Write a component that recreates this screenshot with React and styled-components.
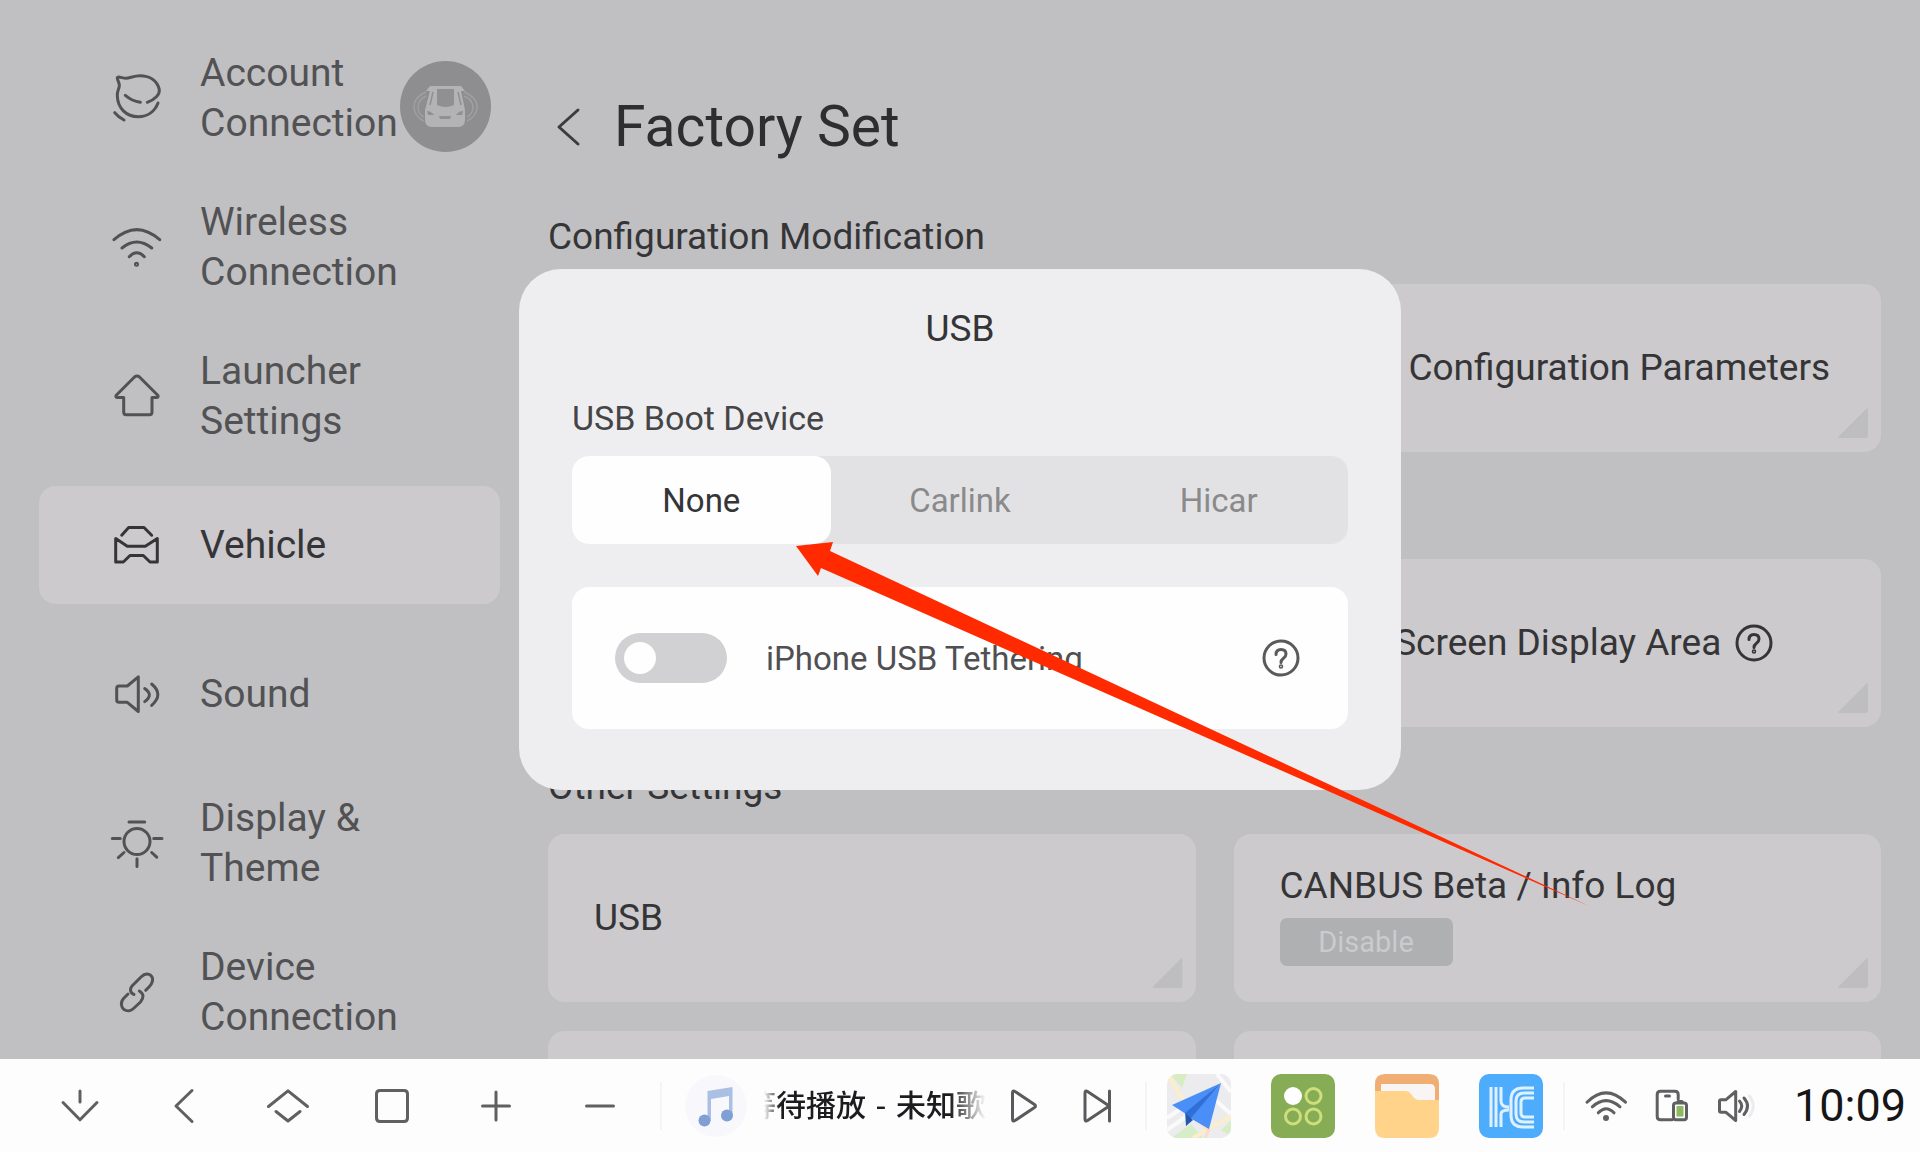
import React, { useState } from 'react';
import styled, { createGlobalStyle } from 'styled-components';


const menuItems = [
    { id: 'account', label: 'Account Connection' },
    { id: 'wireless', label: 'Wireless Connection' },
    { id: 'launcher', label: 'Launcher Settings' },
    { id: 'vehicle', label: 'Vehicle' },
    { id: 'sound', label: 'Sound' },
    { id: 'display', label: 'Display & Theme' },
    { id: 'device', label: 'Device Connection' },
]

const bootDevices = ['None', 'Carlink', 'Hicar'];

const menuIcons = {
    account: (
        <>
            <path d="M34.3 28.3C42 25.500 47 20.500 46.300 15.500C44 6 36 1.700 27 1.700C21 1.700 17 4 13 4.300C10 4.500 4.300 1.500 4.300 4C4.500 7 6.600 8.500 6.300 12C5.800 16 4 17 4.300 22C4.800 34 13 42.700 25.300 42.700C35 42.700 42 37 45 29" />
            <path d="M12.300 21.300Q19 27 27.300 28.300M1.700 38.700Q5 43 11 46" />
        </>
    ),
    wireless: (
        <>
            <path d="M1 16.700Q23.700 -3.500 46.700 16.700M9 25Q23.700 13 38.700 25M16.300 33.700Q23.700 26 31.300 33.700" />
            <circle cx="23.500" cy="41.300" r="1" />
        </>
    ),
    launcher: <path d="M21.500 5Q24 3 26.500 5L45 23.500Q45.500 25.500 43.500 25.500H39V40Q39 42.700 36.500 42.700H13.200Q10.700 42.700 10.700 40V25.500H4.500Q2.500 25.500 3 23.500Z" />,
    vehicle: <path d="M8.700 14.200L15.700 6.500H31L38.700 14.200M2.700 17.600L14.300 25.300H32.300L44.300 17.600V41H37L30.300 34.500H17L10.300 41H2.700Z" />,
    sound: <path d="M6 16H14.300L25.300 6.800V41.500L14.300 32.300H6Q3.700 32.300 3.700 30V18.300Q3.700 16 6 16ZM31.700 18.500Q41 25 31.700 31.600M38.700 14Q51 24.500 38.700 35.400" />,
    display: (
        <>
            <circle cx="24" cy="22.500" r="13" />
            <path d="M16 3H31.700M-0.700 19.500H7.300M40.700 19.500H49M5.300 38.600L11 33.500M38.700 33.500L43.700 38.200M24 39.800V47.400" />
        </>
    ),
    device: <path d="M21 26.500C17 25 16.500 21 19 18L28 9C33 4 38 6 39.500 10C40.500 14 38 17 32.700 22.300M15 26L11 30C7 34 8 39 11 41.500C14 43.500 18 43 20.500 40.500L27.500 34C31 30 31 25.500 26.300 23" />,
}

const navIcons = [
    { label: 'Collapse', d: 'M20 5V16M3 16.500L20 33.800L37 16.500' },
    { label: 'Back', d: 'M28 4.500L12 20L28 35.500' },
    { label: 'Home', d: 'M0.500 20.500L20 4.800L39.500 20.500M8 25.500L20 35L32 25.500' },
    { label: 'Recent apps', d: 'M8 4.500H32Q35.500 4.500 35.500 8V32Q35.500 35.500 32 35.500H8Q4.500 35.500 4.500 32V8Q4.500 4.500 8 4.500Z' },
    { label: 'Volume up', d: 'M20 6V34M6.500 20H33.500' },
    { label: 'Volume down', d: 'M6.500 20H33.500' },
]

const HelpIcon = () => (
    <LineIcon $size={38} viewBox="0 0 38 38">
        <circle cx="19" cy="19" r="17" />
        <path d="M14 15.500Q14 10.500 19 10.500Q24 10.500 24 15Q24 17.500 21.500 19.200Q19 21 19 23.500" />
        <circle cx="19" cy="27.500" r="0.800" />
    </LineIcon>
)

const MapIcon = () => (
    <svg viewBox="0 0 64 64">
        <clipPath id="mapClip"><rect width="64" height="64" rx="10" /></clipPath>
        <g clipPath="url(#mapClip)">
            <rect width="64" height="64" fill="#ececee" />
            <path d="M3 0H20L15 14Z" fill="#d8ecc4" />
            <path d="M4 64L24 50L36 64ZM54 56L64 46V62Z" fill="#d6edc8" />
            <path d="M0 0L16 26M26 64L64 42" stroke="#fbeecb" strokeWidth="4" />
            <path d="M50 0L64 18M0 44L18 32M46 24L64 40M0 56L20 42" stroke="#fafafa" strokeWidth="4" />
            <path d="M26 42L42 56L38 64" stroke="#fbdccb" strokeWidth="3" fill="none" />
            <path d="M54 9L5 31L19 40Z" fill="#4a8ff7" />
            <path d="M54 9L42 55L23 44Z" fill="#4a8ff7" />
            <path d="M54 9L18 39L19 52L24 44Z" fill="#2f6fd8" />
            <path d="M19 40V52L26 46Z" fill="#2458a8" />
        </g>
    </svg>
)

const GridIcon = () => (
    <svg viewBox="0 0 64 64">
        <rect width="64" height="64" rx="10" fill="#86ad55" />
        <circle cx="22" cy="22" r="9" fill="#fff" />
        <g fill="none" stroke="#cede7c" strokeWidth="3">
            <circle cx="42.500" cy="22" r="7.500" />
            <circle cx="22" cy="42.500" r="7.500" />
            <circle cx="42.500" cy="42.500" r="7.500" />
        </g>
    </svg>
)

const FolderIcon = () => (
    <svg viewBox="0 0 64 64">
        <path d="M0 17V10Q0 0 10 0H54Q64 0 64 10V28H0Z" fill="#f0ae75" />
        <path d="M6 10H55Q60 10 60 15V28H6Z" fill="#f8f5f4" />
        <path d="M0 17H31Q34 17 36 20L39 24Q41 26 44 26H64V54Q64 64 54 64H10Q0 64 0 54Z" fill="#ffd38a" />
    </svg>
)

const LinkIcon = () => (
    <svg viewBox="0 0 64 64">
        <rect width="64" height="64" rx="10" fill="#4eacfd" />
        <g fill="none" stroke="#dff1ff" strokeWidth="3">
            <path d="M12 13V53M17 13V53M22 13V27Q22 33 30 33M22 53V40Q22 36 30 36" />
            <path d="M55 14H44Q32 14 32 26V41Q32 53 44 53H55" />
            <path d="M55 19H45Q37 19 37 27V40Q37 48 45 48H55" />
            <path d="M55 24H46Q42 24 42 28V39Q42 43 46 43H55" />
        </g>
    </svg>
)

const apps = [
    { label: 'Maps', Icon: MapIcon },
    { label: 'All apps', Icon: GridIcon },
    { label: 'Files', Icon: FolderIcon },
    { label: 'Hicar', Icon: LinkIcon },
]

const Sidebar = ({ active, onSelect }) => (
    <StyledSidebar>
        {menuItems.map(({ id, label }) => (
            <MenuItem key={id} $active={id === active} onClick={() => onSelect(id)}>
                <LineIcon $size={48} viewBox="0 0 48 48">{menuIcons[id]}</LineIcon>
                <span>{label}</span>
            </MenuItem>
        ))}
    </StyledSidebar>
)

const AssistButton = () => (
    <FloatingButton aria-label="Around view">
        <svg viewBox="0 0 91 91">
            <g fill="none" stroke="#a0a0a2" strokeWidth="1.500">
                <path d="M26 31Q14 36 14 46Q14 55 24 60M64 31Q77 36 77 46Q77 55 67 60" />
                <path d="M26 35Q18 39 18 46Q18 53 24 56M64 35Q73 39 73 46Q73 53 67 56" />
            </g>
            <path d="M30 25H61L65 30H61L65 49V59Q65 66 58 66H32Q25 66 25 59V49L30 30H26Z" fill="#b3b3b5" />
            <path d="M37 28H54V44Q46 48 37 44Z" fill="#909092" />
            <path d="M33 31L30 44M58 31L61 44" stroke="#909092" strokeWidth="1.500" />
            <path d="M27 50Q31 50 34 54L28 54ZM63 50Q59 50 56 54L62 54ZM39 55H51L50 58H40Z" fill="#909092" />
        </svg>
    </FloatingButton>
)

const UsbDialog = () => {

    const [device, setDevice] = useState('None');
    const [tethering, setTethering] = useState(false);

    return (
        <Overlay>
            <Dialog role="dialog" aria-labelledby="usb-title">
                <DialogTitle id="usb-title">USB</DialogTitle>
                <FieldLabel id="boot-label">USB Boot Device</FieldLabel>
                <Segments role="radiogroup" aria-labelledby="boot-label">
                    {bootDevices.map((name) => (
                        <Segment key={name} $active={name === device}>
                            <HiddenInput type="radio" name="boot" checked={name === device} onChange={() => setDevice(name)} />
                            {name}
                        </Segment>
                    ))}
                </Segments>
                <TetherRow>
                    <TetherLabel>
                        <Toggle type="checkbox" checked={tethering} onChange={(e) => setTethering(e.target.checked)} />
                        iPhone USB Tethering
                    </TetherLabel>
                    <PlainButton aria-label="Help"><HelpIcon /></PlainButton>
                </TetherRow>
                <Arrow viewBox="0 0 793 364">
                    <path d="M0 4L37 0L34 9L793 364L25 26L22 34Z" fill="#ff2a00" />
                </Arrow>
            </Dialog>
        </Overlay>
    )
}

const FactorySet = () => (
    <Content>
        <Header>
            <BackButton aria-label="Back">
                <LineIcon $size={40} viewBox="0 0 40 40"><path d="M30 3L11 20L30 37" /></LineIcon>
            </BackButton>
            <h1>Factory Set</h1>
        </Header>
        <Section>
            <h2>Configuration Modification</h2>
            <Cards>
                <Card />
                <Card><CardText>Vehicle Configuration Parameters</CardText></Card>
            </Cards>
        </Section>
        <Section>
            <h2></h2>
            <Cards>
                <Card />
                <Card><CardText>Adjust Screen Display Area<HelpIcon /></CardText></Card>
            </Cards>
        </Section>
        <Section>
            <h2>Other Settings</h2>
            <Cards>
                <Card><CardText>USB</CardText></Card>
                <Card>
                    <CardText>CANBUS Beta / Info Log</CardText>
                    <StateButton>Disable</StateButton>
                </Card>
                <Card />
                <Card />
            </Cards>
        </Section>
    </Content>
)

const BottomBar = () => (
    <StyledBar>
        <NavGroup>
            {navIcons.map(({ label, d }) => (
                <NavButton key={label} aria-label={label}>
                    <LineIcon $size={40} viewBox="0 0 40 40"><path d={d} /></LineIcon>
                </NavButton>
            ))}
        </NavGroup>
        <Divider />
        <Player>
            <Cover>
                <svg viewBox="0 0 62 62">
                    <path d="M22.500 16L47.500 12V40H44V21L26 24V46H22.500Z" fill="#a9c0e2" />
                    <circle cx="19.500" cy="45.500" r="6" fill="#809fd2" />
                    <circle cx="42" cy="40.500" r="6" fill="#809fd2" />
                </svg>
            </Cover>
            <Track><span>等待播放 - 未知歌手</span></Track>
            <PlayerButtons>
                <PlainButton aria-label="Play">
                    <LineIcon $size={40} viewBox="0 0 40 40"><path d="M9.500 7Q9.500 4 12 5.500L31.500 18.500Q33.500 20 31.500 21.500L12 34.500Q9.500 36 9.500 33Z" /></LineIcon>
                </PlainButton>
                <PlainButton aria-label="Next">
                    <LineIcon $size={40} viewBox="0 0 40 40"><path d="M8 7Q8 4 10.500 5.500L30 18.500Q32 20 30 21.500L10.500 34.500Q8 36 8 33ZM32.500 5V35" /></LineIcon>
                </PlainButton>
            </PlayerButtons>
        </Player>
        <Divider />
        <Apps>
            {apps.map(({ label, Icon }) => (
                <AppButton key={label} aria-label={label}><Icon /></AppButton>
            ))}
        </Apps>
        <Divider />
        <Status>
            <LineIcon $size={40} viewBox="0 0 40 40">
                <path d="M1 16.200Q20 -2.500 39.500 16.200M6.300 20.800Q20 8.500 34 20.800M12.300 26.800Q20 18.500 28 26.800" />
                <circle cx="20" cy="32" r="1.500" />
            </LineIcon>
            <LineIcon $size={40} viewBox="0 0 40 40">
                <path d="M26.200 13V8.500Q26.200 5.200 23 5.200H8.500Q5.200 5.200 5.200 8.500V30.500Q5.200 33.800 8.500 33.800H20M13.500 10H17.500" />
                <rect x="21.500" y="17" width="13" height="16.800" rx="2.500" />
                <path d="M26 15.500H30" />
                <rect x="24.500" y="20" width="7" height="10.500" fill="#8db960" stroke="none" />
            </LineIcon>
            <LineIcon $size={40} viewBox="0 0 40 40">
                <path d="M3 13.800H7.700L17.700 5.500V34.500L7.700 26.200H3Q1.500 26.200 1.500 24.700V15.300Q1.500 13.800 3 13.800ZM21.500 15Q26 20 21.500 25.500M26 12Q33 20 26 28.500" />
                <path d="M31.500 10Q39 20 31.500 30" stroke="#ececf0" />
            </LineIcon>
            <Clock>10:09</Clock>
        </Status>
    </StyledBar>
)

const App = () => {

    const [active, setActive] = useState('vehicle');

    return (
        <Screen>
            <GlobalStyle />
            <Page>
                <Sidebar active={active} onSelect={setActive} />
                <FactorySet />
                <AssistButton />
                <UsbDialog />
            </Page>
            <BottomBar />
        </Screen>
    )
}

const GlobalStyle = createGlobalStyle`
    * {
        box-sizing: border-box;
    }

    body {
        margin: 0;
        background-color: #c0c0c2;
        color: #353537;
        font-family: Roboto, "Noto Sans CJK SC", sans-serif;
    }

    button {
        padding: 0;
        border: none;
        background: none;
        color: inherit;
        font: inherit;
        cursor: pointer;
    }

    h1, h2 {
        margin: 0;
        font-weight: 400;
    }

    svg {
        display: block;
    }
`

const LineIcon = styled.svg`
    flex: none;
    width: ${({ $size }) => $size}px;
    height: ${({ $size }) => $size}px;
    overflow: visible;
    fill: none;
    stroke: currentColor;
    stroke-width: 3;
    stroke-linecap: round;
    stroke-linejoin: round;
`

const Screen = styled.div`
    display: flex;
    flex-direction: column;
    height: 100vh;
    overflow: hidden;
`

const Page = styled.div`
    position: relative;
    flex: 1;
    min-height: 0;
    display: flex;
    overflow: hidden;
`

const StyledSidebar = styled.nav`
    flex: none;
    width: 548px;
    padding: 39px 48px 0 39px;
    display: flex;
    flex-direction: column;
    gap: 31px;
`

const MenuItem = styled.button`
    flex: none;
    height: 118px;
    padding: 0 96px 0 74px;
    display: flex;
    align-items: center;
    gap: 39px;
    border-radius: 17px;
    background-color: ${({ $active }) => $active ? '#cccacd' : 'transparent'};
    color: ${({ $active }) => $active ? '#353537' : '#525254'};
    font-size: 39px;
    line-height: 50px;
    text-align: left;
`

const FloatingButton = styled.button`
    position: absolute;
    top: 61px;
    left: 400px;
    width: 91px;
    height: 91px;
    border-radius: 50%;
    background-color: #8e8e90;
`

const Content = styled.main`
    flex: 1;
    min-width: 0;
    padding: 94px 39px 0 0;
`

const Header = styled.header`
    display: flex;
    align-items: center;
    gap: 26px;
    margin-bottom: 52px;

    & h1 {
        color: #2e2e30;
        font-size: 57px;
        line-height: 66px;
    }
`

const PlainButton = styled.button`
    flex: none;
    color: #5a5a5c;
`

const BackButton = styled(PlainButton)`
    color: #3c3c3e;
`

const Section = styled.section`
    margin-bottom: 35px;

    & h2 {
        height: 50px;
        margin-bottom: 22px;
        font-size: 37px;
        line-height: 50px;
    }
`

const Cards = styled.div`
    display: grid;
    grid-template-columns: 1fr 1fr;
    gap: 29px 38px;
`

const Card = styled.div`
    position: relative;
    height: 168px;
    padding: 0 46px;
    display: flex;
    flex-direction: column;
    justify-content: center;
    align-items: flex-start;
    gap: 16px;
    border-radius: 17px;
    background-color: #cccacd;

    &::after {
        content: '';
        position: absolute;
        right: 13px;
        bottom: 14px;
        width: 31px;
        height: 31px;
        border-radius: 3px;
        background-color: #bebec0;
        clip-path: polygon(100% 0, 100% 100%, 0 100%);
    }
`

const CardText = styled.div`
    display: flex;
    align-items: center;
    gap: 14px;
    font-size: 37px;
    line-height: 32px;
    white-space: nowrap;
`

const StateButton = styled.button`
    && {
        width: 173px;
        height: 48px;
        border-radius: 7px;
        background-color: #aeb0b2;
        color: #cccacd;
        font-size: 29px;
    }
`

const Overlay = styled.div`
    position: absolute;
    inset: 0;
    display: flex;
    align-items: center;
    justify-content: center;
`

const Dialog = styled.div`
    position: relative;
    width: 882px;
    padding: 36px 53px 61px;
    border-radius: 42px;
    background-color: #eeeef0;
`

const DialogTitle = styled.h2`
    font-size: 37px;
    line-height: 48px;
    text-align: center;
`

const FieldLabel = styled.div`
    margin: 45px 0 18px;
    color: #454547;
    font-size: 34px;
    line-height: 40px;
`

const Segments = styled.div`
    display: flex;
    height: 88px;
    margin-bottom: 43px;
    border-radius: 17px;
    background-color: #e2e2e4;
`

const Segment = styled.label`
    flex: 1;
    display: flex;
    align-items: center;
    justify-content: center;
    border-radius: 17px;
    background-color: ${({ $active }) => $active ? '#fefefe' : 'transparent'};
    color: ${({ $active }) => $active ? '#353537' : '#8a8a8c'};
    font-size: 33px;
    cursor: pointer;
`

const HiddenInput = styled.input`
    position: absolute;
    opacity: 0;
    pointer-events: none;
`

const TetherRow = styled.div`
    height: 142px;
    padding: 0 48px 0 43px;
    display: flex;
    align-items: center;
    justify-content: space-between;
    border-radius: 17px;
    background-color: #fefefe;
`

const TetherLabel = styled.label`
    display: flex;
    align-items: center;
    gap: 39px;
    color: #505052;
    font-size: 33px;
`

const Toggle = styled.input`
    appearance: none;
    width: 112px;
    height: 50px;
    margin: 0;
    padding: 9px;
    display: flex;
    justify-content: flex-start;
    border-radius: 25px;
    background-color: #d1d1d3;
    cursor: pointer;

    &::before {
        content: '';
        width: 32px;
        height: 32px;
        border-radius: 50%;
        background-color: #fefefe;
    }

    &:checked {
        justify-content: flex-end;
        background-color: #4a8ff7;
    }
`

const Arrow = styled.svg`
    position: absolute;
    top: 273px;
    left: 277px;
    width: 793px;
    height: 364px;
    pointer-events: none;
`

const StyledBar = styled.footer`
    flex: none;
    height: 93px;
    display: flex;
    align-items: center;
    background-color: #fdfdfe;
    color: #606062;
`

const NavGroup = styled.div`
    display: flex;
    padding: 0 8px 0 28px;
`

const NavButton = styled.button`
    width: 104px;
    height: 93px;
    display: flex;
    align-items: center;
    justify-content: center;
`

const Divider = styled.div`
    width: 2px;
    height: 48px;
    background-color: #f4f4f8;
`

const Player = styled.div`
    flex: 1;
    min-width: 0;
    padding: 0 28px 0 23px;
    display: flex;
    align-items: center;
    gap: 17px;
`

const Cover = styled.div`
    flex: none;
    width: 62px;
    height: 62px;
    border-radius: 50%;
    background-color: #f8f8fc;
`

const Track = styled.div`
    flex: 1;
    min-width: 0;
    padding-left: 12px;
    display: flex;
    justify-content: center;
    overflow: hidden;
    color: #1c1c1e;
    font-family: "DejaVu Sans", "Noto Sans CJK SC", sans-serif;
    font-size: 30px;
    font-weight: 500;
    line-height: 44px;
    white-space: nowrap;
    mask-image: linear-gradient(to right, transparent, #000 16px, #000 calc(100% - 36px), transparent);
`

const PlayerButtons = styled.div`
    display: flex;
    gap: 34px;
`

const Apps = styled.div`
    display: flex;
    gap: 40px;
    padding: 0 20px;
`

const AppButton = styled.button`
    width: 64px;
    height: 64px;
`

const Status = styled.div`
    display: flex;
    align-items: center;
    gap: 26px;
    padding: 0 14px 0 21px;
`

const Clock = styled.time`
    margin-left: 10px;
    color: #161618;
    font-size: 45px;
`

export default App;
